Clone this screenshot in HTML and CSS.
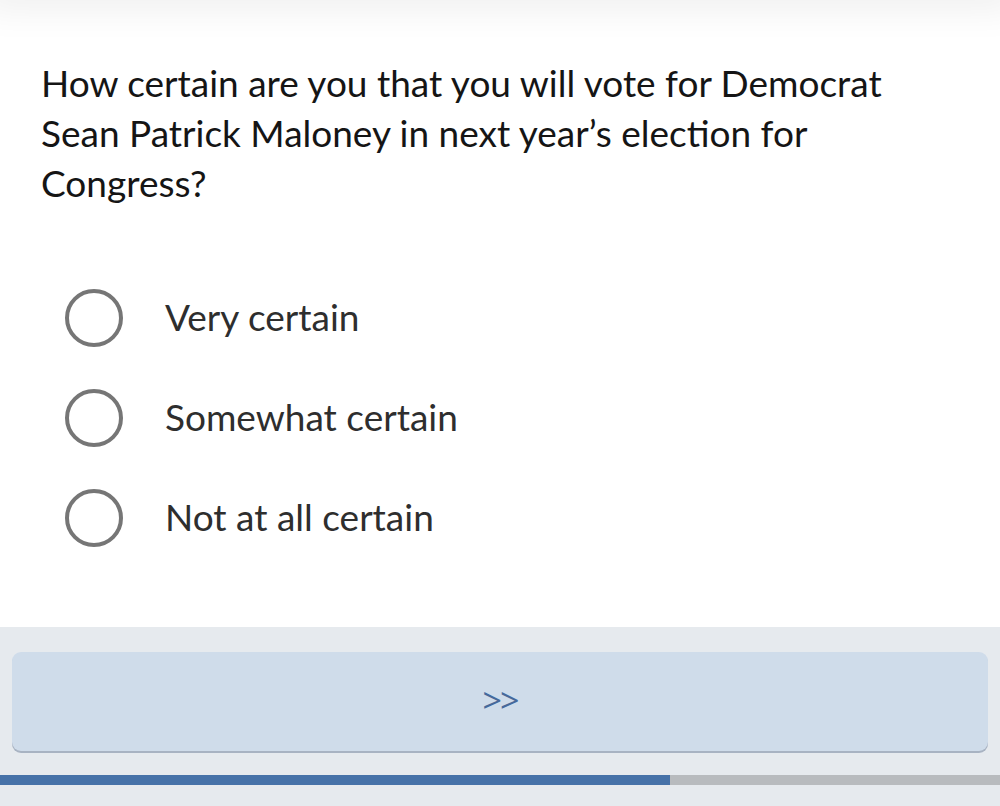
FILE: index.html
```html
<!DOCTYPE html>
<html>
<head>
<meta charset="utf-8">
<link rel="stylesheet" href="styles.css">
</head>
<body>
<div class="page">
  <div class="topshade"></div>
  <main class="content">
    <p class="question">How certain are you that you will vote for Democrat Sean Patrick Maloney in next year’s election for Congress?</p>
    <div class="options">
      <label class="option"><span class="radio"></span><span class="label">Very certain</span></label>
      <label class="option"><span class="radio"></span><span class="label">Somewhat certain</span></label>
      <label class="option"><span class="radio"></span><span class="label">Not at all certain</span></label>
    </div>
  </main>
  <footer class="footer">
    <button class="next">&gt;&gt;</button>
    <div class="progress"><div class="progress-fill" style="width:67%"></div></div>
  </footer>
</div>
</body>
</html>
```
FILE: styles.css
```css
* { box-sizing: border-box; }
html, body { margin: 0; padding: 0; background: #fff; }
body { font-family: Lato, "Open Sans", sans-serif; }
.page { width: 1000px; height: 806px; display: flex; flex-direction: column; position: relative; overflow: hidden; }
.topshade { position: absolute; left: -20px; right: -20px; top: -30px; height: 30px;
  box-shadow: 0 4px 40px rgba(0,0,0,0.09); background: #fff; }
.content { flex: 1; padding: 58px 40px 0 41px; position: relative; }
.question { margin: 0; font-size: 37px; line-height: 50px; color: #151515; width: 900px; }
.options { margin-top: 82px; display: flex; flex-direction: column; gap: 44px; padding-left: 24px; }
.option { display: flex; align-items: center; height: 56px; }
.radio { width: 58px; height: 58px; border-radius: 50%; border: 4px solid #767676; flex: none; }
.label { margin-left: 42px; font-size: 37px; color: #2e2e2e; padding-bottom: 4px; }
.footer { height: 179px; background: #e6eaee; display: flex; flex-direction: column; padding-top: 25px; }
.next { margin: 0 12px; height: 99px; border: none; border-radius: 9px; background: #cfdcea;
  box-shadow: 0 2px 0 #a8b3c2; color: #46699b; font-family: "Open Sans", sans-serif; font-size: 34px; letter-spacing: -2px; padding: 0 0 4px; }
.progress { margin-top: 24px; height: 10px; background: #b8bbbe; }
.progress-fill { height: 100%; background: #4672a8; }
```
